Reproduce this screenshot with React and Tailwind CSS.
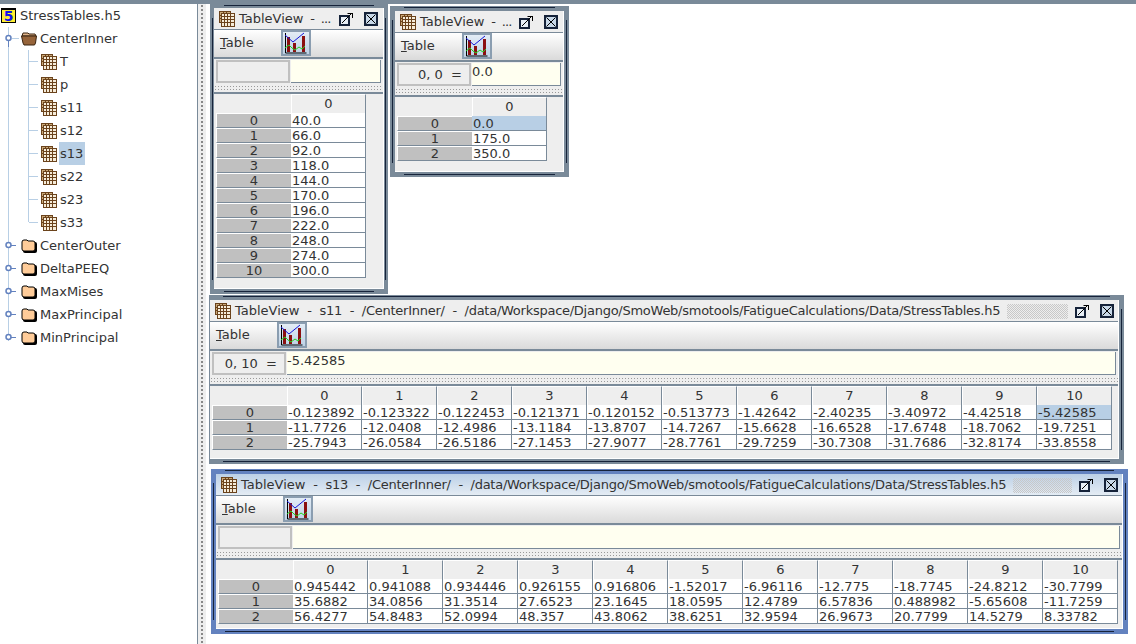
const font = '"DejaVu Sans", sans-serif';

function GridIcon() {
  return (
    <svg viewBox="0 0 16 16" className="h-4 w-4 shrink-0" shapeRendering="crispEdges">
      <rect x="0.5" y="0.5" width="11" height="11" fill="#c9a877" stroke="#6b431c" />
      <path d="M4.5 1v2M7.5 1v2M1 4.5h2M1 7.5h2" stroke="#6b431c" fill="none" />
      <rect x="2.5" y="2.5" width="13" height="13" fill="#f6ecd9" stroke="#6b431c" />
      <path d="M5.5 3v12M8.5 3v12M11.5 3v12M3 5.5h12M3 8.5h12M3 11.5h12" stroke="#6b431c" fill="none" />
    </svg>
  );
}

function ChartButton() {
  return (
    <span className="flex h-[26px] w-[30px] shrink-0 items-center justify-center border-2 border-[#8a9db0] bg-gradient-to-b from-[#e3ecf5] to-[#bdd1e5]">
      <svg viewBox="0 0 22 22" className="h-[22px] w-[22px]">
        <rect x="2" y="5" width="3" height="15" fill="#8b1010" />
        <rect x="8" y="11" width="3" height="9" fill="#8b1010" />
        <rect x="17" y="4" width="3" height="16" fill="#8b1010" />
        <path d="M0.5 1v20h21" stroke="#000" fill="none" />
        <path d="M0 3l8 7 11-9" stroke="#1515d8" fill="none" />
        <path d="M0 16l4-3 3 3 3 2 4-3 3 2 3-3" stroke="#22d422" fill="none" />
      </svg>
    </span>
  );
}

function TitleButtons() {
  return (
    <span className="flex shrink-0 items-center gap-[11px]">
      <svg viewBox="0 0 14 14" className="h-[14px] w-[14px]">
        <rect x="1" y="4" width="9" height="9" fill="#e8eff6" stroke="#16233a" strokeWidth="2" />
        <path d="M3 11l9-9M8.5 1.5h5M13.5 1v5" stroke="#000" fill="none" />
      </svg>
      <span className="flex h-[14px] w-[14px] items-center justify-center border-2 border-[#16233a] bg-[#c8d8e8]">
        <svg viewBox="0 0 10 10" className="h-[10px] w-[10px]">
          <path d="M0.5 0.5l9 9M9.5 0.5l-9 9" stroke="#000" fill="none" />
        </svg>
      </span>
    </span>
  );
}

function Table({ cols, rows, selected }) {
  return (
    <div className="leading-none">
      <div className="flex">
        <div className="w-[75px] shrink-0" />
        {cols.map((c) => (
          <div key={c} className="flex h-[19px] w-[75px] shrink-0 items-center justify-center border-x border-t border-l-white border-r-[#7a8a99] border-t-white bg-[#eeeeee] pb-px">
            {c}
          </div>
        ))}
      </div>
      {rows.map((row, r) => (
        <div key={r} className="flex h-[15px]">
          <div className="flex w-[75px] shrink-0 items-center justify-center border-y border-l border-white border-b-[#7a8a99] bg-[#c0c0c0]">
            {r}
          </div>
          {row.map((v, c) => (
            <div
              key={c}
              className={`flex w-[75px] shrink-0 items-center overflow-hidden border-r border-b border-[#7a8a99] pl-px ${selected && selected[0] === r && selected[1] === c ? 'bg-[#b8cfe5]' : 'bg-white'}`}
            >
              {v}
            </div>
          ))}
        </div>
      ))}
    </div>
  );
}

function Frame({ box, active, rest, restClass, titlePad, dots, label, value, cols, rows, selected }) {
  return (
    <div className={`absolute flex flex-col ${active ? 'bg-[#6382bf]' : 'bg-[#7a8a99]'} ${box}`}>
      <div className="absolute left-[14px] right-[14px] top-px h-px bg-[#16233a]" />
      <div className="absolute bottom-[2px] left-[14px] right-[14px] h-px bg-[#16233a]" />
      <div className="absolute bottom-[14px] left-[2px] top-[14px] w-px bg-[#16233a]" />
      <div className="absolute bottom-[14px] right-[2px] top-[14px] w-px bg-[#16233a]" />
      <div className="relative flex min-h-0 flex-1 flex-col overflow-hidden border-b border-r border-white bg-[#eeeeee]">
        <div className={`flex h-[21px] shrink-0 items-center justify-between pl-[5px] pt-px ${titlePad} ${active ? 'bg-gradient-to-b from-[#bcd0e6] to-[#e4ecf4]' : 'bg-[#eeeeee]'}`}>
          <span className="flex items-center gap-[4px] whitespace-pre">
            <GridIcon />
            <span>
              TableView<span className={restClass}>{rest}</span>
            </span>
          </span>
          {dots && <span className="mx-[7px] h-[15px] flex-1 bg-[conic-gradient(#c8c8c8_25%,transparent_0_50%,#c8c8c8_0_75%,transparent_0)] bg-[length:2px_2px]" />}
          <TitleButtons />
        </div>
        <div className="flex h-[28px] shrink-0 items-center border-t border-[#7a8a99] bg-gradient-to-b from-white to-[#dadada] pb-[2px] pl-[6px]">
          <span className="w-[61px]">
            <span className="underline">T</span>able
          </span>
          <ChartButton />
        </div>
        <div className="flex h-[26px] shrink-0 gap-px border-t-2 border-[#7a8a99] px-[2px] pt-px">
          <div className="flex w-[74px] shrink-0 items-center justify-end whitespace-pre border-2 border-[#c0c0c0] bg-[#eeeeee] pr-[7px]">
            {label}
          </div>
          <div className="flex-1 border-b border-r border-[#7a8a99] bg-[#fffff0] leading-[18px]">{value}</div>
        </div>
        <div className="flex h-[11px] shrink-0 items-center border-b-2 border-[#7a8a99]">
          <div className="h-[6px] w-full bg-[radial-gradient(#999_0.7px,transparent_0.8px)] bg-[length:3px_3px]" />
        </div>
        <div className="min-h-0 flex-1 px-[2px]">
          <Table cols={cols} rows={rows} selected={selected} />
        </div>
      </div>
    </div>
  );
}

const tree = ['T', 'p', 's11', 's12', 's13', 's22', 's23', 's33'];
const groups = ['CenterOuter', 'DeltaPEEQ', 'MaxMises', 'MaxPrincipal', 'MinPrincipal'];

function Folder({ open }) {
  return (
    <svg viewBox="0 0 16 14" className="h-[14px] w-4 shrink-0">
      {open ? (
        <>
          <path d="M1 4l1-3h5l1 1h6l1 2z" fill="#e0b48a" stroke="#3a2410" />
          <path d="M0.5 4h15l-1 7-1 2H3l-1-2z" fill="#96643a" stroke="#3a2410" />
        </>
      ) : (
        <>
          <rect x="2" y="3" width="14" height="11" rx="2" fill="#000" />
          <path d="M1 3q0-2 2-2h3l1 1h5q2 0 2 2v6q0 2-2 2H3q-2 0-2-2z" fill="#ffcc99" stroke="#000" />
        </>
      )}
    </svg>
  );
}

function TreeLines() {
  const closed = [245, 268, 291, 314, 337];
  return (
    <svg className="pointer-events-none absolute left-0 top-0 h-[360px] w-[60px]" shapeRendering="crispEdges">
      <path d="M8.5 23v314M28.5 46v172" stroke="#b8cfe5" fill="none" />
      <path d="M12 34.5h7M29 57.5h9M29 80.5h9M29 103.5h9M29 126.5h9M29 149.5h9M29 172.5h9M29 195.5h9M29 218.5h9" stroke="#b8cfe5" fill="none" />
      <path d="M8.5 37v6" stroke="#6382bf" strokeWidth="1" fill="none" />
      <circle cx="8.5" cy="34" r="2.5" fill="#fff" stroke="#6382bf" strokeWidth="1.5" shapeRendering="auto" />
      {closed.map((y) => (
        <g key={y}>
          <path d={`M11 ${y - 3.5}h5`} stroke="#6382bf" fill="none" />
          <circle cx="8.5" cy={y - 4} r="2.5" fill="#fff" stroke="#6382bf" strokeWidth="1.5" shapeRendering="auto" />
        </g>
      ))}
    </svg>
  );
}

const a = ['40.0', '66.0', '92.0', '118.0', '144.0', '170.0', '196.0', '222.0', '248.0', '274.0', '300.0'].map((v) => [v]);
const b = ['0.0', '175.0', '350.0'].map((v) => [v]);
const c = [
  ['-0.123892', '-0.123322', '-0.122453', '-0.121371', '-0.120152', '-0.513773', '-1.42642', '-2.40235', '-3.40972', '-4.42518', '-5.42585'],
  ['-11.7726', '-12.0408', '-12.4986', '-13.1184', '-13.8707', '-14.7267', '-15.6628', '-16.6528', '-17.6748', '-18.7062', '-19.7251'],
  ['-25.7943', '-26.0584', '-26.5186', '-27.1453', '-27.9077', '-28.7761', '-29.7259', '-30.7308', '-31.7686', '-32.8174', '-33.8558'],
];
const d = [
  ['0.945442', '0.941088', '0.934446', '0.926155', '0.916806', '-1.52017', '-6.96116', '-12.775', '-18.7745', '-24.8212', '-30.7799'],
  ['35.6882', '34.0856', '31.3514', '27.6523', '23.1645', '18.0595', '12.4789', '6.57836', '0.488982', '-5.65608', '-11.7259'],
  ['56.4277', '54.8483', '52.0994', '48.357', '43.8062', '38.6251', '32.9594', '26.9673', '20.7799', '14.5279', '8.33782'],
];
const cols11 = ['0', '1', '2', '3', '4', '5', '6', '7', '8', '9', '10'];
const path = '/CenterInner/  -  /data/Workspace/Django/SmoWeb/smotools/FatigueCalculations/Data/StressTables.h5';

export default function App() {
  return (
    <div className="flex h-[644px] w-[1136px] flex-col overflow-hidden bg-white text-[13px] text-[#333]" style={{ fontFamily: font }}>
      <div className="h-[4px] shrink-0 bg-[#7a8a99]" />
      <div className="flex min-h-0 flex-1">
        <div className="relative w-[197px] shrink-0">
          <TreeLines />
          <div className="relative flex h-[23px] items-center gap-[3px] pl-px">
            <span className="flex h-[15px] w-[15px] items-center justify-center border border-t-2 border-black bg-[#ffee33] text-[14px] font-bold leading-none text-[#1111ee]">5</span>
            <span className="ml-px">StressTables.h5</span>
          </div>
          <div className="relative flex h-[23px] items-center gap-[3px] pl-[21px]">
            <Folder open />
            <span>CenterInner</span>
          </div>
          {tree.map((t) => (
            <div key={t} className="relative flex h-[23px] items-center gap-[2px] pl-[41px]">
              <GridIcon />
              <span className={`flex h-[23px] items-center pl-px pr-[2px] ${t === 's13' ? 'bg-[#b8cfe5]' : ''}`}>{t}</span>
            </div>
          ))}
          {groups.map((g) => (
            <div key={g} className="relative flex h-[23px] items-center gap-[3px] pl-[21px]">
              <Folder />
              <span>{g}</span>
            </div>
          ))}
        </div>
        <div className="flex w-[11px] shrink-0 justify-center border-l border-r-2 border-l-[#7a8a99] border-r-white bg-[#eeeeee]">
          <div className="h-full w-[4px] bg-[radial-gradient(#888_1px,transparent_1px)] bg-[length:4px_4px]" />
        </div>
        <div className="relative flex-1">
          <Frame box="left-[2px] top-0 h-[290px] w-[178px] p-[4px] pb-[5px]" rest="  -  ..." restClass="tracking-[-0.8px]" titlePad="pr-[5px]" label="" value="" cols={['0']} rows={a} />
          <Frame box="left-[182px] top-[2px] h-[171px] w-[179px] p-[5px]" rest="  -  ..." restClass="tracking-[-0.8px]" titlePad="pr-[5px]" label="0, 0  =" value="0.0" cols={['0']} rows={b} selected={[0, 0]} />
          <Frame box="left-[1px] top-[291px] h-[169px] w-[915px] p-[5px] pl-px" rest={`  -  s11  -  ${path}`} restClass="tracking-[-0.26px]" titlePad="pr-[4px]" dots label="0, 10  =" value="-5.42585" cols={cols11} rows={c} selected={[0, 10]} />
          <Frame box="left-[3px] top-[465px] h-[165px] w-[917px] p-[5px]" active rest={`  -  s13  -  ${path}`} restClass="tracking-[-0.26px]" titlePad="pr-[4px]" dots label="" value="" cols={cols11} rows={d} />
        </div>
      </div>
    </div>
  );
}
